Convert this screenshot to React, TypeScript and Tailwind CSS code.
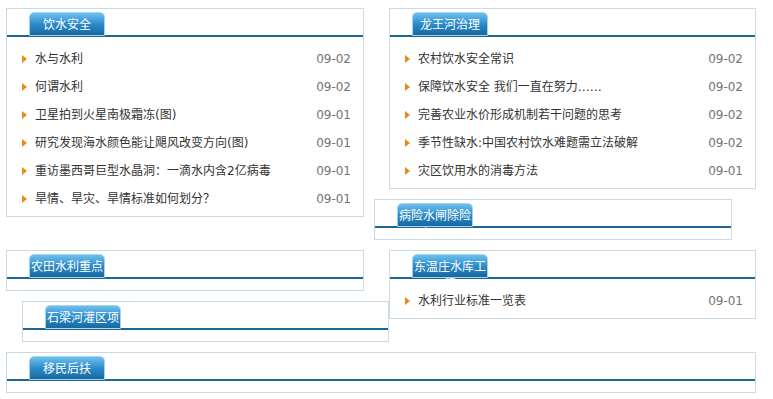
import React from "react";

type Item = { title: string; date: string };

const FONT = "font-['DejaVu_Sans','Noto_Sans_CJK_SC',sans-serif]";

function Box({ title, items = [], className = "" }: { title: string; items?: Item[]; className?: string }) {
  return (
    <div className={`shrink-0 border border-[#c9dbe6] bg-white ${className}`}>
      <div className="relative h-[32px] overflow-hidden">
        <div className="h-[28px] border-b-2 border-[#1d6698]" />
        {/* tab sits over the header line; long titles wrap and get cut like the old site */}
        <div className="absolute left-[22px] top-[3px] h-[24px] w-[76px] rounded-t-[5px] border border-[#a6d3ef] bg-gradient-to-b from-[#6cc0ec] via-[#2b8ccb] to-[#17689f] pt-[2px] text-center text-[12px] leading-[18px] text-white font-['Noto_Sans_CJK_SC',sans-serif]">
          {title}
        </div>
      </div>
      <ul className="pt-[4px] pb-[3px]">
        {items.map((it, i) => (
          <li key={i} className="flex h-[28px] items-center pl-[15px] pr-[12px] text-[12px]">
            <span className="h-0 w-0 border-y-[4px] border-l-[5px] border-y-transparent border-l-[#ea8a12]" />
            <span className="ml-[8px] flex-1 text-[#333]">{it.title}</span>
            <span className="text-[#737373]">{it.date}</span>
          </li>
        ))}
      </ul>
    </div>
  );
}

const yinshui: Item[] = [
  { title: "水与水利", date: "09-02" },
  { title: "何谓水利", date: "09-02" },
  { title: "卫星拍到火星南极霜冻(图)", date: "09-01" },
  { title: "研究发现海水颜色能让飓风改变方向(图)", date: "09-01" },
  { title: "重访墨西哥巨型水晶洞：一滴水内含2亿病毒", date: "09-01" },
  { title: "旱情、旱灾、旱情标准如何划分？", date: "09-01" },
];

const longwang: Item[] = [
  { title: "农村饮水安全常识", date: "09-02" },
  { title: "保障饮水安全 我们一直在努力……", date: "09-02" },
  { title: "完善农业水价形成机制若干问题的思考", date: "09-02" },
  { title: "季节性缺水:中国农村饮水难题需立法破解", date: "09-02" },
  { title: "灾区饮用水的消毒方法", date: "09-01" },
];

export default function App() {
  return (
    <div className={`min-h-[399px] w-[773px] bg-white ${FONT}`}>
      <div className="flex items-start pt-[8px]">
        <Box title="饮水安全" items={yinshui} className="ml-[6px] w-[358px]" />
        <div className="ml-[25px]">
          <Box title="龙王河治理" items={longwang} className="w-[367px]" />
          <Box title="病险水闸除险加固" className="ml-[-15px] mt-[10px] w-[358px]" />
        </div>
      </div>
      <div className="mt-[10px] flex items-start">
        <div className="ml-[6px] w-[358px] shrink-0">
          <Box title="农田水利重点县" className="w-[358px]" />
          <Box title="石梁河灌区项目" className="ml-[16px] mt-[10px] w-[367px]" />
        </div>
        <Box
          title="东温庄水库工程"
          items={[{ title: "水利行业标准一览表", date: "09-01" }]}
          className="ml-[25px] w-[367px]"
        />
      </div>
      <Box title="移民后扶" className="ml-[6px] mt-[10px] w-[750px]" />
    </div>
  );
}
